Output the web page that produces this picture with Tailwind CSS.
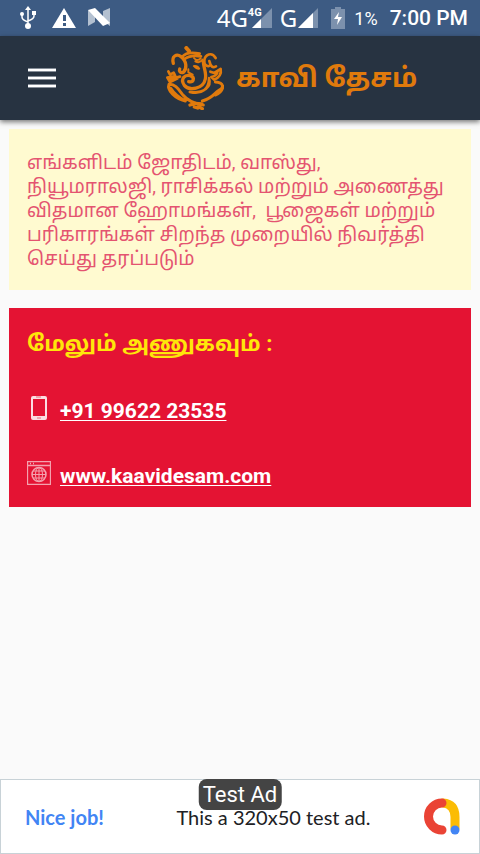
<!DOCTYPE html>
<html lang="ta">
<head>
<meta charset="utf-8">
<meta name="viewport" content="width=device-width, initial-scale=1">
<title>காவி தேசம்</title>
<script src="https://cdn.jsdelivr.net/npm/@tailwindcss/browser@4"></script>
</head>
<body class="flex min-h-screen flex-col bg-[#fafafa] font-[Roboto,'Noto_Sans_Tamil','Noto_Sans',sans-serif]">
<div class="flex h-9 items-center justify-between bg-[#3d5b83] pr-3 pl-5 text-white">
  <div class="flex items-center gap-3">
    <svg class="mr-1 h-6 w-4" viewBox="0 0 16 24" fill="none" stroke="#fff" stroke-width="1.500"><path d="M8 3v17M2 8v3q0 3 6 5M14 7v3q0 3-6 5"/><path d="M8 0l3 4H5zM12 5h4v4h-4z" fill="#fff" stroke="none"/><circle cx="2" cy="8" r="2" fill="#fff" stroke="none"/><circle cx="8" cy="20" r="3" fill="#fff" stroke="none"/></svg>
    <svg class="h-5 w-6" viewBox="0 0 24 20"><path d="M12 0l12 20H0z" fill="#fff"/><path d="M11 7h3v6h-3zM11 15h3v3h-3z" fill="#3d5b83"/></svg>
    <svg class="h-5 w-6" viewBox="0 0 24 20"><path d="M0 2l7 4v8l-7 4zM15 3l7-3v18l-7-5z" fill="#b3c0d0"/><path d="M0 2l7-2 15 15-7 3z" fill="#fff"/></svg>
  </div>
  <div class="flex items-center">
    <span class="font-['Noto_Sans',sans-serif] text-2xl">4G</span>
    <span class="relative mr-2 block h-5 w-6">
      <svg class="h-5 w-full" viewBox="0 0 24 20"><path d="M24 0v20H4z" fill="#7c91ad"/><path d="M13 11v9H4z" fill="#fff"/></svg>
      <span class="absolute -top-px left-0 text-[11px] leading-none font-bold">4G</span>
    </span>
    <span class="font-['Noto_Sans',sans-serif] text-2xl">G</span>
    <svg class="mr-3 ml-px h-5 w-5" viewBox="0 0 20 20"><path d="M20 0v20H0z" fill="#7c91ad"/><path d="M15 5v15H0z" fill="#fff"/></svg>
    <svg class="mr-2 h-6 w-4" viewBox="0 0 16 24"><path d="M5 1h6v2h4v20H1V3h4z" fill="#7c91ad"/><path d="M9 6L4 13h4l-1 6 5-8H8z" fill="#fff"/></svg>
    <span class="mr-3 pt-0.5 text-lg">1%</span>
    <span class="pt-0.5 text-[21px] font-medium">7:00 PM</span>
  </div>
</div>
<header class="relative flex h-21 items-center bg-[#273341] pl-7 shadow-[0_2px_5px_#0008]">
  <button type="button" aria-label="Menu" class="flex h-5 w-7 flex-col justify-between">
    <span class="h-1 w-full border-y border-[#858d97] bg-white"></span>
    <span class="h-1 w-full border-y border-[#858d97] bg-white"></span>
    <span class="h-1 w-full border-y border-[#858d97] bg-white"></span>
  </button>
  <a href="#" class="ml-27 flex items-center gap-3 text-[#e07a0c]">
    <svg class="h-16 w-15" viewBox="27 22 180 192" fill="none" stroke="#e07a0c" stroke-width="10" stroke-linecap="round" stroke-linejoin="round" aria-hidden="true">
      <path d="M94 28l8 9" stroke-width="12"/>
      <path d="M82 54C92 42 110 40 134 45M90 60C105 49 120 50 138 53" stroke-width="8"/>
      <path d="M55 74C49 52 65 44 78 54C96 68 96 90 85 101C75 104 72 96 74 91"/>
      <path d="M182 58C170 38 150 48 148 65C147 77 154 84 162 82M163 67C168 86 173 88 183 83" stroke-width="8"/>
      <path d="M117 58Q126 70 137 59M121 68Q134 75 143 63" stroke-width="6"/>
      <path d="M116 82Q128 94 133 90Q127 80 116 82Z" stroke-width="5" fill="#e07a0c"/>
      <path d="M100 92V101L113 108" stroke-width="6"/>
      <path d="M145 70C146 88 155 103 151 121C145 151 103 158 88 140C74 119 91 107 106 111C121 117 116 132 101 129"/>
      <path d="M162 118C172 147 147 163 104 160C142 170 161 150 162 118Z" stroke-width="7" fill="#e07a0c"/>
      <path d="M166 99L178 103L197 91Q201 112 178 123L169 115Q184 112 187 102" stroke-width="8"/>
      <path d="M40 98L45 108L56 102L61 112L37 117L45 130M46 121L75 114M45 130L68 119" stroke-width="8"/>
      <path d="M91 187C62 181 35 156 42 137C62 136 70 151 83 168Q105 194 145 199M47 149Q62 172 90 186" stroke-width="9"/>
      <path d="M181 130C208 132 208 149 190 156C179 163 173 178 142 187M204 143Q201 162 181 169" stroke-width="9"/>
      <path d="M105 199L121 194L140 196L130 204L142 210M118 205L128 208" stroke-width="10"/>
    </svg>
    <span class="text-[27px] leading-9 font-bold">காவி தேசம்</span>
  </a>
</header>
<main class="flex flex-1 flex-col gap-[18px] px-[9px] pt-[9px]">
  <section class="bg-[#fffad0] px-[18px] pt-[22px] pb-[19px]">
    <p class="text-[19px] leading-6 whitespace-pre-wrap text-[#e45470]">எங்களிடம் ஜோதிடம், வாஸ்து, நியூமராலஜி, ராசிக்கல் மற்றும் அணைத்து விதமான ஹோமங்கள்,  பூஜைகள் மற்றும் பரிகாரங்கள் சிறந்த முறையில் நிவர்த்தி செய்து தரப்படும்</p>
  </section>
  <section class="flex flex-col bg-[#e41333] px-[18px] pt-5 pb-4 text-white">
    <h1 class="text-[22px] leading-8 font-bold text-[#ffe60a]">மேலும் அணுகவும் :</h1>
    <div class="mt-9 flex items-start gap-[9px]">
      <svg class="h-6 w-6" viewBox="0 0 24 24" aria-hidden="true"><path fill="#fbdde2" fill-rule="evenodd" d="M6 0h12q2 0 2 2v20q0 2-2 2H6q-2 0-2-2V2q0-2 2-2zM6 3v17h12V3z"/><path d="M9 1h5M10 22h4" stroke="#e66a7d"/></svg>
      <a href="tel:+919962223535" class="text-[21px] leading-[30px] font-bold underline decoration-1 underline-offset-2">+91 99622 23535</a>
    </div>
    <div class="mt-[35px] flex items-start gap-[9px]">
      <svg class="h-6 w-6" viewBox="0 0 24 24" fill="none" stroke="#f4a1ae" aria-hidden="true"><path d="M.5.5h23v23H.5zM.5 4.500h23M3 2.500h1M6 2.500h1" stroke-width="1.300"/><circle cx="12" cy="13.500" r="7" stroke-width="1.500"/><ellipse cx="12" cy="13.500" rx="3.500" ry="7"/><path d="M12 6v15M5 13.500h14M6 10h12M6 17h12"/></svg>
      <a href="https://www.kaavidesam.com" class="text-[21px] leading-[30px] font-bold underline decoration-1 underline-offset-2">www.kaavidesam.com</a>
    </div>
  </section>
</main>
<aside class="relative flex h-[75px] items-center justify-between border border-[#c8d2d7] bg-white pr-4 pl-6 font-[Lato,sans-serif]">
  <a href="#" class="text-xl font-bold text-[#4285f4]">Nice job!</a>
  <span class="ml-5 text-xl text-[#202124]">This a 320x50 test ad.</span>
  <svg class="h-10 w-10" viewBox="0 0 40 40" fill="none" stroke-width="9" stroke-linecap="round" aria-hidden="true"><path d="M20 6Q32 7 32 20v11" stroke="#fbbc04"/><path d="M19 6a13.500 13.500 0 0 0 0 27" stroke="#ea4335"/><circle cx="32" cy="33" r="4.500" fill="#4285f4"/></svg>
  <span class="absolute -top-px left-1/2 -translate-x-1/2 rounded-lg bg-[#444] px-1 font-[Roboto,sans-serif] text-[22px] leading-[31px] whitespace-nowrap text-white">Test Ad</span>
</aside>
</body>
</html>
